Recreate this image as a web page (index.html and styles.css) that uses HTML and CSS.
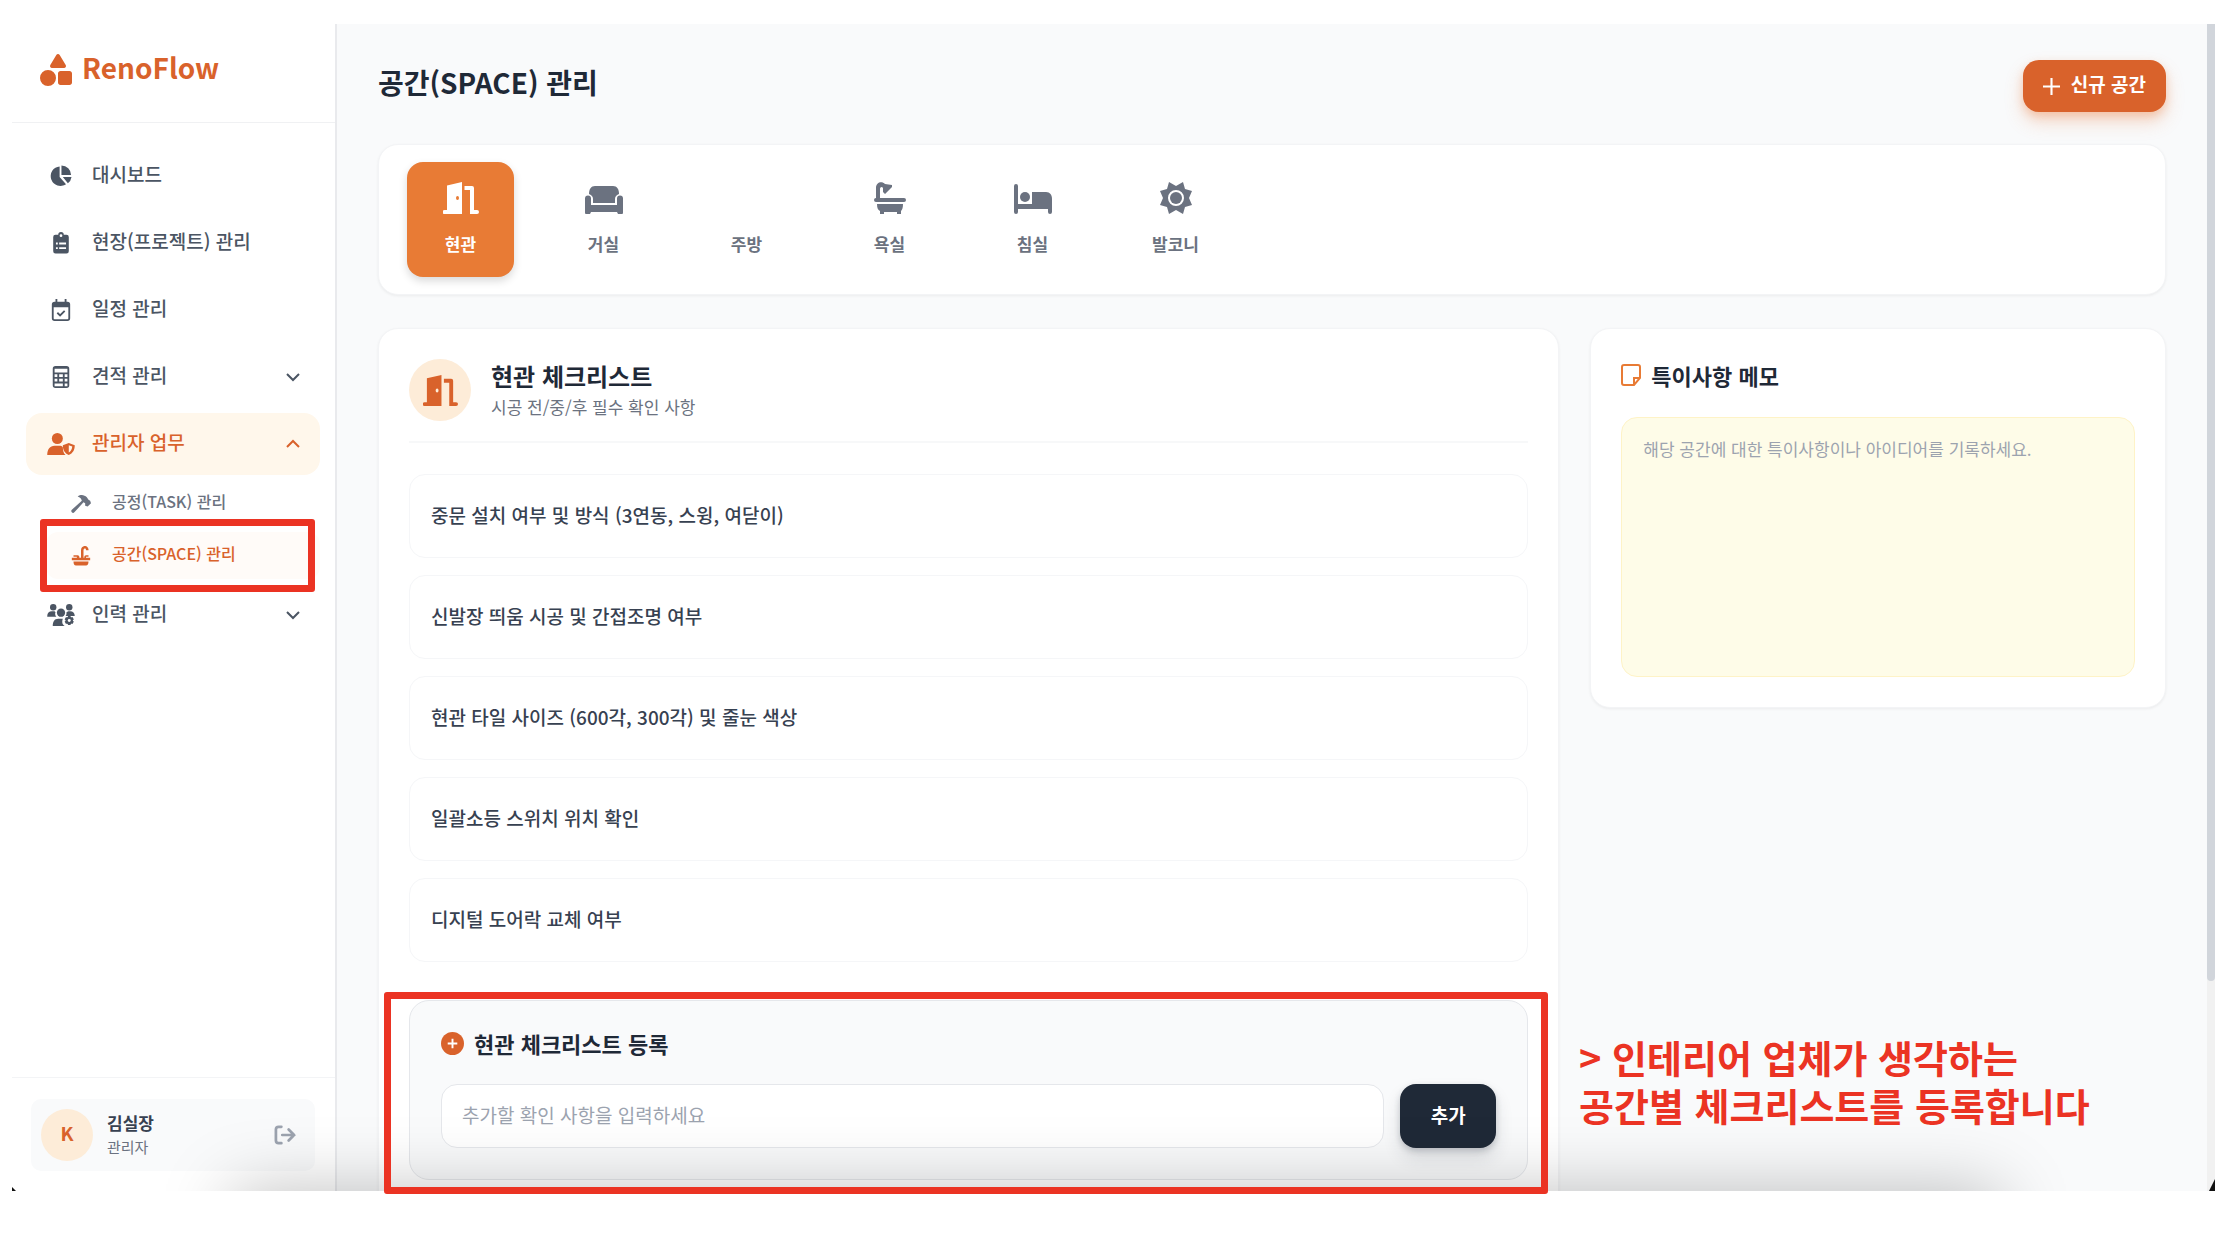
FILE: index.html
```html
<!DOCTYPE html>
<html lang="ko">
<head>
    <meta charset="UTF-8">
    <meta name="viewport" content="width=device-width, initial-scale=1.0">
    <title>RenoFlow - 공간(SPACE) 관리</title>
    <link rel="stylesheet" href="styles.css">
</head>
<body>

    <div class="app">
        <aside class="sidebar">
            <div class="logo">
                <svg class="logo-icon" viewBox="0 0 512 512"><path d="M315 16C309 6 299 0 288 0s-22 6-27 16l-96 160c-6 10-6 22-1 32s17 16 28 16h192c12 0 22-6 28-16s6-22-1-32zM288 312v144c0 22 18 40 40 40h144c22 0 40-18 40-40V312c0-22-18-40-40-40H328c-22 0-40 18-40 40zM128 512a128 128 0 1 0 0-256 128 128 0 1 0 0 256z"/></svg>
                <span>RenoFlow</span>
            </div>

            <nav class="nav">
                <a href="#" class="nav-item">
                    <svg class="nav-icon" viewBox="0 0 24 24"><path d="M10.5 1.500V13l7 8A10.700 10.700 0 1 1 10.500 1.500z"/><path d="M12.500 0.500A10.500 10.500 0 0 1 23 11H12.500zM14 13h9.500a11 11 0 0 1-4 7z"/></svg>
                    <span class="nav-label">대시보드</span>
                </a>
                <a href="#" class="nav-item">
                    <svg class="nav-icon" viewBox="0 0 24 24"><path fill-rule="evenodd" d="M6 3h3a3 3 0 0 1 6 0h3a2.500 2.500 0 0 1 2.500 2.500v15.500A2.500 2.500 0 0 1 18 23.500H6a2.500 2.500 0 0 1-2.500-2.500V5.500A2.500 2.500 0 0 1 6 3zm6-.5a1.500 1.500 0 1 0 0 3 1.500 1.500 0 0 0 0-3zM6.500 11.500v2h2v-2zm3.500 0v2h7.500v-2zM6.500 16.500v2h2v-2zm3.500 0v2h7.500v-2z"/></svg>
                    <span class="nav-label">현장(프로젝트) 관리</span>
                </a>
                <a href="#" class="nav-item">
                    <svg class="nav-icon" viewBox="0 0 24 24"><path fill-rule="evenodd" d="M6 0h2v3h8V0h2v3h1a3 3 0 0 1 3 3v15a3 3 0 0 1-3 3H5a3 3 0 0 1-3-3V6a3 3 0 0 1 3-3h1zM4 9v12a1 1 0 0 0 1 1h14a1 1 0 0 0 1-1V9z"/><path class="line" d="M8 15l3 3 5-5"/></svg>
                    <span class="nav-label">일정 관리</span>
                </a>
                <a href="#" class="nav-item">
                    <svg class="nav-icon" viewBox="0 0 24 24"><path fill-rule="evenodd" d="M6 0h12a3 3 0 0 1 3 3v18a3 3 0 0 1-3 3H6a3 3 0 0 1-3-3V3a3 3 0 0 1 3-3zM5 3v4h14V3zM5 9v3h3V9zm5 0v3h4V9zm6 0v3h3V9zM5 14v3h3v-3zm5 0v3h4v-3zm6 0v3h3v-3zM5 19v3h9v-3zm11 0v3h3v-3z"/></svg>
                    <span class="nav-label">견적 관리</span>
                    <svg class="chevron" viewBox="0 0 16 16"><path d="M2 5l6 6 6-6"/></svg>
                </a>
                <a href="#" class="nav-item active">
                    <svg class="nav-icon" viewBox="0 0 30 24"><circle cx="11" cy="6" r="6"/><path d="M0 24c0-6 3-10 8-10h5c2 0 3 .5 4 1.500 0 4 1 7 3 8.500z"/><path fill-rule="evenodd" d="M23.500 11l6.500 2.300c0 5-2 8.700-6.500 10.700-4.500-2-6.500-5.700-6.500-10.700zm0 2.400v8c2.200-1.500 3.600-3.700 3.800-6.600z"/></svg>
                    <span class="nav-label">관리자 업무</span>
                    <svg class="chevron" viewBox="0 0 16 16"><path d="M2 11l6-6 6 6"/></svg>
                </a>
                <div class="sub-nav">
                    <a href="#" class="sub-item">
                        <svg class="sub-icon" viewBox="0 0 24 24"><path d="M8 3c4-3 8-2 11 1l2 3 2 1 1 3-4 4-3-1v-3l-2-1L4 22c-2 2-5-1-3-3L13 8c-1-3-2-4-5-5z"/></svg>
                        <span class="nav-label">공정(TASK) 관리</span>
                    </a>
                    <a href="#" class="sub-item active">
                        <svg class="sub-icon" viewBox="0 0 24 24"><path d="M3 11h5a2 2 0 0 1 2 2v1h2V5c0-6 8-7 9-1v1h-3c0-3-3-2-3 0v9h1v-1a2 2 0 0 1 2-2h3v2h-3v1h5v3H1v-3h6v-1H3zM3 18.500h18c0 3-1 5-3 5H6c-2 0-3-2-3-5z"/></svg>
                        <span class="nav-label">공간(SPACE) 관리</span>
                    </a>
                </div>
                <a href="#" class="nav-item">
                    <svg class="nav-icon" viewBox="0 0 30 24"><circle cx="6.500" cy="3.500" r="3.500"/><circle cx="24" cy="3.500" r="3.500"/><circle cx="15" cy="9.500" r="4.500"/><path d="M0 13c0-3 2-5 5-5h3l1 1c-1 2 0 4 1 5H0zM30 13c0-3-2-5-5-5h-2l-2 1c0 2 0 3-1 4zM6 24c0-5 2-8 6-8h5c-1 3-1 6 2 8z"/><path class="gear" d="M24 13v10M19.700 15.500l8.600 5M28.300 15.500l-8.600 5"/><circle cx="24" cy="18" r="4"/><circle cx="24" cy="18" r="1.600" fill="#fff"/></svg>
                    <span class="nav-label">인력 관리</span>
                    <svg class="chevron" viewBox="0 0 16 16"><path d="M2 5l6 6 6-6"/></svg>
                </a>
            </nav>

            <div class="sidebar-footer">
                <div class="user">
                    <div class="avatar">K</div>
                    <div class="user-info">
                        <div class="user-name">김실장</div>
                        <div class="user-role">관리자</div>
                    </div>
                    <button class="logout" aria-label="로그아웃">
                        <svg viewBox="0 0 24 22"><path d="M8 2H5a3 3 0 0 0-3 3v12a3 3 0 0 0 3 3h3M9 11h13M16 5l6 6-6 6"/></svg>
                    </button>
                </div>
            </div>
        </aside>

        <main class="main">
            <header class="page-header">
                <h1>공간(SPACE) 관리</h1>
                <button class="btn-new">
                    <svg viewBox="0 0 16 16"><path d="M8 0v16M0 8h16"/></svg>
                    <span>신규 공간</span>
                </button>
            </header>

            <div class="card spaces">
                <button class="space active">
                    <svg viewBox="0 0 36 36"><path fill-rule="evenodd" d="M4 5.500L19 2v32H1.500a1.500 1.500 0 0 1 0-4H4zM14.500 16a1.500 2 0 1 0 0 4 1.500 2 0 0 0 0-4z"/><path d="M21.500 6H29a2 2 0 0 1 2 2v22h3a1.500 1.500 0 0 1 0 4h-7V10h-5.500z"/></svg>
                    <span>현관</span>
                </button>
                <button class="space">
                    <svg class="wide" viewBox="0 0 40 36"><path d="M5 14c0-5 2-8 6-8h18c4 0 6 3 6 8-3 1-4 3-4 5v4H9v-4c0-2-1-4-4-5z"/><path d="M1 18.500a3 3 0 0 1 6 0V25h26v-6.500a3 3 0 0 1 6 0V33a1 1 0 0 1-1 1h-4l-1-2H7l-1 2H2a1 1 0 0 1-1-1z"/></svg>
                    <span>거실</span>
                </button>
                <button class="space">
                    <svg viewBox="0 0 36 36"></svg>
                    <span>주방</span>
                </button>
                <button class="space">
                    <svg viewBox="0 0 36 36"><path d="M4 18V8c0-6 6-7 9-4l7 1v2l-7 7-2-2V8c-1-2-3-1-3 1v9h24a1.500 1.500 0 0 1 0 4H4a1.500 1.500 0 0 1 0-4zM5 24h26c0 4-1 6-2 7v3h-4v-2H12v2H8v-3c-2-1-3-3-3-7z"/></svg>
                    <span>욕실</span>
                </button>
                <button class="space">
                    <svg class="wide" viewBox="0 0 40 36"><path d="M1 6a2 2 0 0 1 4 0v18h14V12h14c4 0 6 3 6 7v13a2 2 0 0 1-4 0v-3H5v3a2 2 0 0 1-4 0z"/><circle cx="12" cy="17" r="5"/></svg>
                    <span>침실</span>
                </button>
                <button class="space">
                    <svg viewBox="0 0 36 36"><path fill-rule="evenodd" d="M11 2l7 4 7-4 2 7 7 2-3 7 3 7-7 2-2 7-7-4-7 4-2-7-7-2 3-7-3-7 7-2zM18 10a8 8 0 1 0 0 16 8 8 0 0 0 0-16z"/><circle cx="18" cy="18" r="6"/></svg>
                    <span>발코니</span>
                </button>
            </div>

            <div class="columns">
                <section class="card checklist">
                    <div class="checklist-head">
                        <div class="head-icon">
                            <svg viewBox="0 0 36 36"><path fill-rule="evenodd" d="M4 5.500L19 2v32H1.500a1.500 1.500 0 0 1 0-4H4zM14.500 16a1.500 2 0 1 0 0 4 1.500 2 0 0 0 0-4z"/><path d="M21.500 6H29a2 2 0 0 1 2 2v22h3a1.500 1.500 0 0 1 0 4h-7V10h-5.500z"/></svg>
                        </div>
                        <div>
                            <h2>현관 체크리스트</h2>
                            <p>시공 전/중/후 필수 확인 사항</p>
                        </div>
                    </div>

                    <ul class="items">
                        <li>중문 설치 여부 및 방식 (3연동, 스윙, 여닫이)</li>
                        <li>신발장 띄움 시공 및 간접조명 여부</li>
                        <li>현관 타일 사이즈 (600각, 300각) 및 줄눈 색상</li>
                        <li>일괄소등 스위치 위치 확인</li>
                        <li>디지털 도어락 교체 여부</li>
                    </ul>

                    <form class="register">
                        <label class="register-title" for="newItem">
                            <svg viewBox="0 0 24 24"><circle cx="12" cy="12" r="12"/><path d="M12 7v10M7 12h10"/></svg>
                            현관 체크리스트 등록
                        </label>
                        <div class="register-row">
                            <input type="text" id="newItem" placeholder="추가할 확인 사항을 입력하세요">
                            <button type="button" class="btn-add">추가</button>
                        </div>
                    </form>
                </section>

                <section class="card memo">
                    <label class="memo-title" for="memo">
                        <svg viewBox="0 0 20 22"><path d="M3 1h14a2 2 0 0 1 2 2v11l-6 7H3a2 2 0 0 1-2-2V3a2 2 0 0 1 2-2zM13 20.500V14h6"/></svg>
                        특이사항 메모
                    </label>
                    <textarea id="memo" placeholder="해당 공간에 대한 특이사항이나 아이디어를 기록하세요."></textarea>
                </section>
            </div>
        </main>

        <div class="scrollbar"><div class="thumb"></div></div>
        <div class="bottom-shade"></div>
        <div class="corner corner-left"></div>
        <div class="corner corner-right"></div>
    </div>

    <!-- guide marks on top of the screen -->
    <div class="mark mark-menu"></div>
    <div class="mark mark-form"></div>
    <p class="mark-text">&gt; 인테리어 업체가 생각하는<br>공간별 체크리스트를 등록합니다</p>

</body>
</html>
```
FILE: styles.css
```css
* {
    box-sizing: border-box;
    margin: 0;
    padding: 0;
}

body {
    height: 100vh;
    padding: 24px 5px 45px 12px;
    background: #fff;
    color: #1f2937;
    font-family: "Noto Sans CJK KR", sans-serif;
    font-size: 19px;
    position: relative;
    overflow: hidden;
}

button, input, textarea {
    font-family: inherit;
    border: none;
    outline: none;
}

button {
    cursor: pointer;
}

a {
    color: inherit;
    text-decoration: none;
}

svg {
    fill: currentColor;
    flex-shrink: 0;
}

.app {
    display: flex;
    height: 100%;
    position: relative;
    overflow: hidden;
}

/* sidebar */
.sidebar {
    width: 325px;
    flex-shrink: 0;
    display: flex;
    flex-direction: column;
    border-right: 2px solid #e9eaed;
    background: #fff;
}

.logo {
    display: flex;
    align-items: center;
    gap: 10px;
    height: 99px;
    padding: 0 28px 6px;
    border-bottom: 1px solid #f0f1f3;
    color: #d9622b;
    font-size: 28px;
    font-weight: bold;
}

.logo span {
    padding-bottom: 6px;
}

.logo-icon {
    width: 32px;
    height: 32px;
}

.nav {
    flex: 1;
    display: flex;
    flex-direction: column;
    gap: 5px;
    padding: 22px 15px 0 14px;
    font-weight: 500;
    color: #4b5563;
}

.nav-item {
    display: flex;
    align-items: center;
    gap: 16px;
    height: 62px;
    padding: 0 19px 0 20px;
    border-radius: 16px;
}

.nav-item.active {
    background: #fff7eb;
    color: #d9622b;
}

.nav-label {
    flex: 1;
    padding-bottom: 6px;
}

.nav-icon {
    width: 30px;
    height: 22px;
}

.line {
    fill: none;
    stroke: currentColor;
    stroke-width: 2;
}

.gear {
    stroke: currentColor;
    stroke-width: 3;
}

.chevron {
    width: 16px;
    height: 16px;
    fill: none;
    stroke: currentColor;
    stroke-width: 2;
}

.sub-nav {
    display: flex;
    flex-direction: column;
    gap: 5px;
    padding-left: 20px;
}

.sub-item {
    display: flex;
    align-items: center;
    gap: 20px;
    height: 47px;
    padding: 0 24px;
    border-radius: 12px;
    color: #6b7280;
    font-size: 16px;
}

.sub-item.active {
    background: #fffbf8;
    color: #d9622b;
}

.sub-icon {
    width: 22px;
    height: 20px;
}

.sidebar-footer {
    padding: 21px 20px 20px 19px;
    border-top: 1px solid #f3f4f6;
}

.user {
    display: flex;
    align-items: center;
    gap: 14px;
    height: 72px;
    padding: 0 18px 0 10px;
    border-radius: 10px;
    background: #f9fafb;
}

.avatar {
    width: 52px;
    height: 52px;
    border-radius: 50%;
    background: #fdecd8;
    color: #d9622b;
    font-size: 19px;
    font-weight: bold;
    line-height: 48px;
    text-align: center;
}

.user-info {
    flex: 1;
}

.user-name {
    color: #374151;
    font-size: 17px;
    font-weight: bold;
    line-height: 24px;
}

.user-role {
    color: #6b7280;
    font-size: 15px;
    line-height: 24px;
}

.logout {
    background: none;
    color: #9ca3af;
}

.logout svg {
    display: block;
    width: 24px;
    height: 20px;
    fill: none;
    stroke: currentColor;
    stroke-width: 3;
    stroke-linecap: round;
}

/* main */
.main {
    flex: 1;
    min-width: 0;
    padding: 36px 49px 0 41px;
    background: #f9fafb;
}

.page-header {
    display: flex;
    align-items: flex-start;
    justify-content: space-between;
    height: 84px;
}

.page-header h1 {
    font-size: 28px;
    line-height: 44px;
}

.btn-new {
    display: flex;
    align-items: center;
    gap: 11px;
    height: 52px;
    padding: 0 20px;
    border-radius: 16px;
    background: #d9622b;
    color: #fff;
    font-size: 19px;
    font-weight: bold;
    box-shadow: 0 10px 18px rgba(234, 120, 54, 0.25), 0 4px 8px rgba(234, 120, 54, 0.25);
}

.btn-new span {
    padding-bottom: 6px;
}

.btn-new svg {
    width: 17px;
    height: 17px;
    stroke: currentColor;
    stroke-width: 2;
}

.card {
    border: 1px solid #f3f4f6;
    border-radius: 20px;
    background: #fff;
    box-shadow: 0 1px 3px rgba(0, 0, 0, 0.06);
}

.spaces {
    display: flex;
    gap: 36px;
    padding: 17px 28px;
    margin-bottom: 33px;
}

.space {
    display: flex;
    flex-direction: column;
    align-items: center;
    gap: 16px;
    width: 107px;
    height: 115px;
    padding-top: 18px;
    border-radius: 16px;
    background: none;
    color: #6b7280;
    font-size: 17px;
    font-weight: bold;
    line-height: 24px;
}

.space svg {
    width: 36px;
    height: 36px;
}

.space .wide {
    width: 40px;
}

.space.active {
    background: #e87b35;
    color: #fff;
    box-shadow: 0 4px 8px rgba(0, 0, 0, 0.15);
}

.columns {
    display: grid;
    grid-template-columns: 1182fr 576fr;
    gap: 31px;
    align-items: start;
}

.checklist {
    padding: 30px 30px 31px;
}

.checklist-head {
    display: flex;
    align-items: center;
    gap: 20px;
    padding-bottom: 20px;
    margin-bottom: 31px;
    border-bottom: 2px solid #f7f8f9;
}

.head-icon {
    display: flex;
    align-items: center;
    justify-content: center;
    width: 62px;
    height: 62px;
    border-radius: 50%;
    background: #fdecd8;
    color: #d9622b;
}

.head-icon svg {
    width: 35px;
    height: 35px;
}

.checklist-head h2 {
    font-size: 24px;
    line-height: 34px;
}

.checklist-head p {
    color: #6b7280;
    font-size: 17px;
    line-height: 28px;
}

.items {
    display: flex;
    flex-direction: column;
    gap: 17px;
    margin-bottom: 38px;
    list-style: none;
}

.items li {
    height: 84px;
    padding: 0 21px;
    border: 1px solid #f5f6f8;
    border-radius: 16px;
    color: #374151;
    font-weight: 500;
    line-height: 80px;
}

.register {
    padding: 26px 31px 31px;
    border: 1px solid #e5e7eb;
    border-radius: 20px;
    background: #f9fafb;
}

.register-title {
    display: flex;
    align-items: center;
    gap: 10px;
    margin-bottom: 25px;
    font-size: 22px;
    font-weight: bold;
    line-height: 32px;
}

.register-title svg {
    width: 23px;
    height: 23px;
    color: #d9622b;
}

.register-title path {
    stroke: #fff;
    stroke-width: 2;
}

.register-row {
    display: flex;
    gap: 16px;
}

.register-row input {
    flex: 1;
    height: 64px;
    padding: 0 20px 4px;
    border: 1px solid #e5e7eb;
    border-radius: 16px;
    background: #fff;
    font-size: 19px;
}

::placeholder {
    color: #9ca3af;
}

.btn-add {
    width: 96px;
    height: 64px;
    padding-bottom: 4px;
    border-radius: 16px;
    background: #1f2937;
    color: #fff;
    font-size: 19px;
    font-weight: bold;
    box-shadow: 0 10px 18px rgba(31, 41, 55, 0.12), 0 3px 6px rgba(31, 41, 55, 0.2);
}

.memo {
    padding: 30px;
}

.memo-title {
    display: flex;
    align-items: center;
    gap: 10px;
    margin-bottom: 26px;
    font-size: 22px;
    font-weight: bold;
    line-height: 32px;
}

.memo-title svg {
    width: 20px;
    height: 22px;
    fill: none;
    stroke: #e87b35;
    stroke-width: 2;
}

.memo textarea {
    display: block;
    width: 100%;
    height: 260px;
    padding: 18px 21px;
    border: 1px solid #fef3c7;
    border-radius: 16px;
    background: #fefce8;
    font-size: 17px;
    line-height: 26px;
    resize: none;
}

.scrollbar {
    position: absolute;
    top: 0;
    right: 0;
    width: 8px;
    height: 100%;
    background: #f1f1f1;
}

.thumb {
    height: 82%;
    border-radius: 0 0 4px 4px;
    background: #d1d5db;
}

/* soft shade along the bottom edge */
.bottom-shade {
    position: absolute;
    top: 100%;
    left: 220px;
    right: 215px;
    height: 100px;
    box-shadow: 0 0 70px rgba(0, 0, 0, 0.25);
    pointer-events: none;
}

.corner {
    position: absolute;
    bottom: 0;
    background: #111;
}

.corner-left {
    left: 0;
    width: 4px;
    height: 4px;
    clip-path: polygon(0 0, 100% 100%, 0 100%);
}

.corner-right {
    right: 0;
    width: 6px;
    height: 12px;
    clip-path: polygon(100% 0, 100% 100%, 0 100%);
}

/* guide marks */
.mark {
    position: absolute;
    border: 7px solid #eb3323;
    border-radius: 3px;
    pointer-events: none;
}

.mark-menu {
    left: 40px;
    top: 519px;
    width: 275px;
    height: 73px;
}

.mark-form {
    left: 384px;
    top: 992px;
    width: 1164px;
    height: 202px;
}

.mark-text {
    position: absolute;
    left: 1579px;
    top: 1033px;
    color: #eb3323;
    font-size: 38px;
    font-weight: bold;
    line-height: 48px;
}
```
